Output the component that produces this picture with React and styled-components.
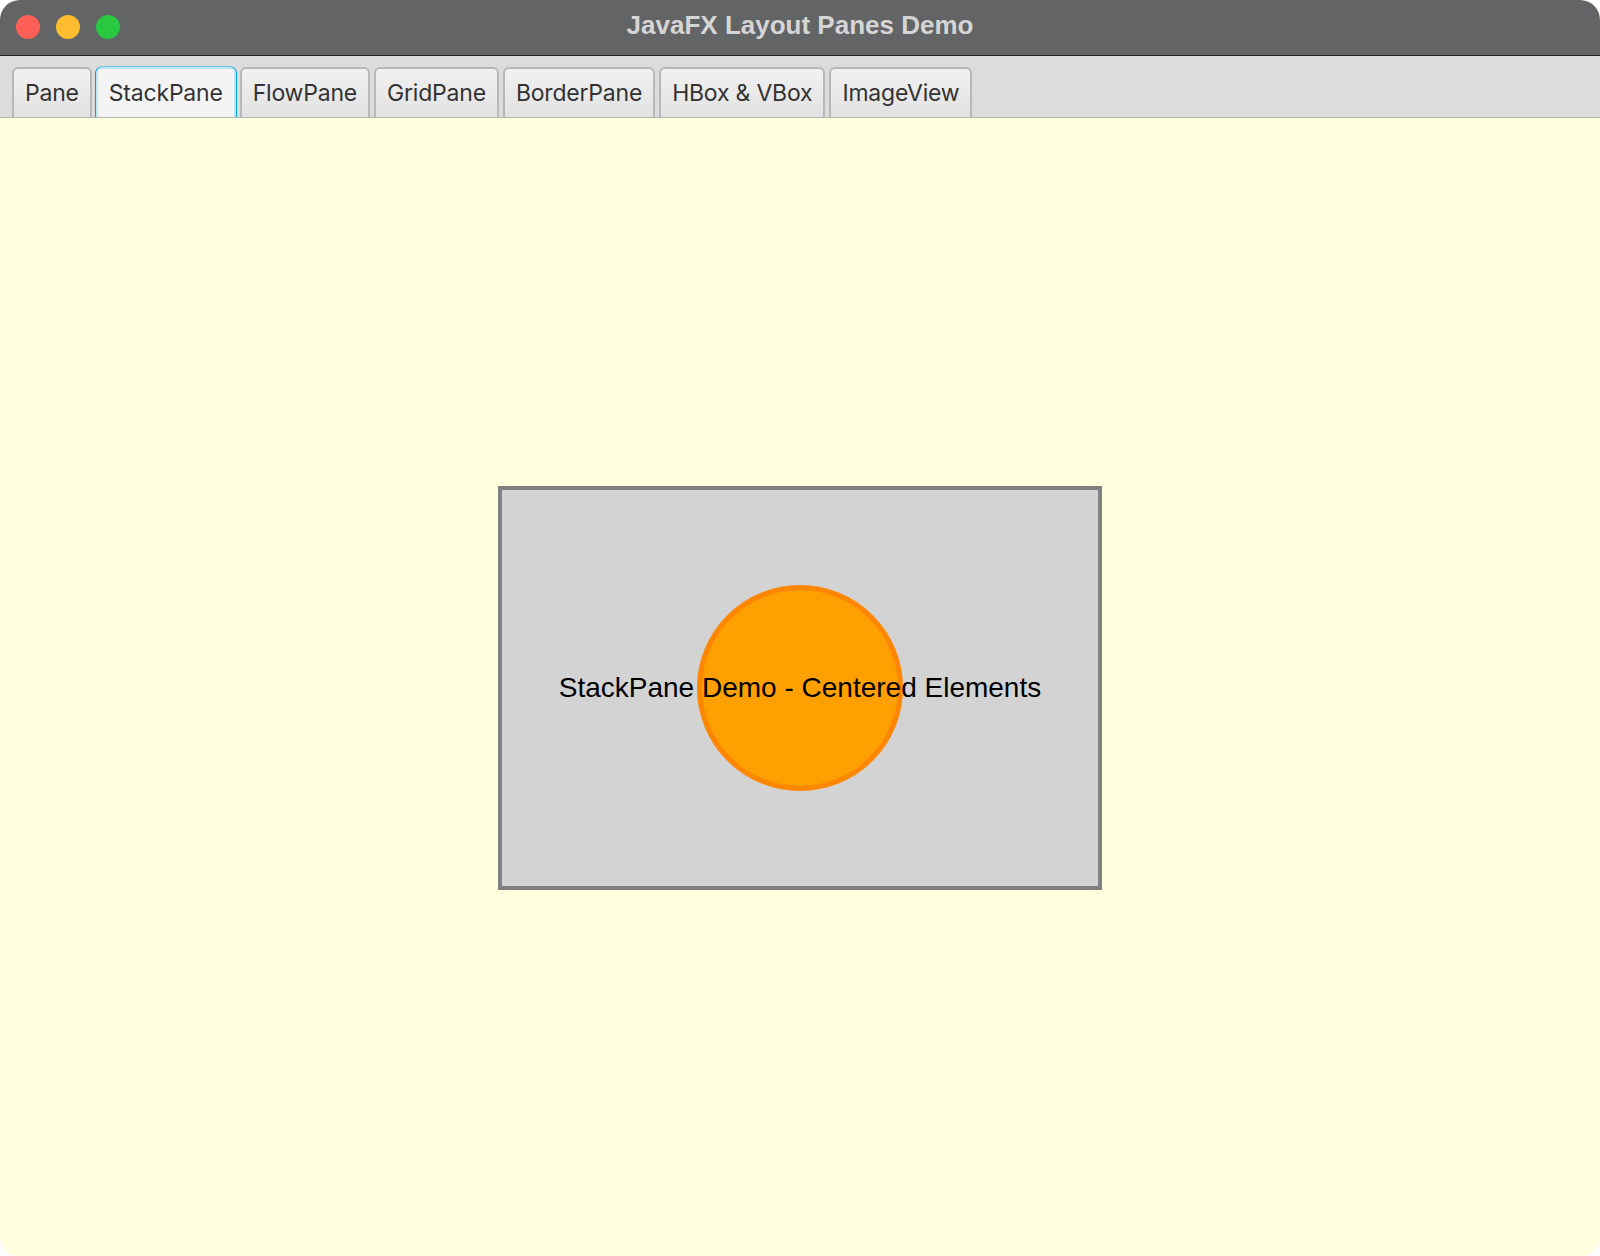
import React, { useState } from 'react'
import styled, { createGlobalStyle } from 'styled-components'

const GlobalStyle = createGlobalStyle`
	html, body {
		margin: 0;
		padding: 0;
		background: #ffffff;
	}
	#root {
		width: 1600px;
		height: 1256px;
	}
`

const tabs = ['Pane', 'StackPane', 'FlowPane', 'GridPane', 'BorderPane', 'HBox & VBox', 'ImageView']

const App = () => {
	const [active, setActive] = useState('StackPane')

	return (
		<>
			<GlobalStyle />
			<Window>
				<TitleBar>
					<Lights>
						<Light color='#ff5f57' />
						<Light color='#febc2e' />
						<Light color='#28c840' />
					</Lights>
					<Title>JavaFX Layout Panes Demo</Title>
				</TitleBar>
				<TabHeader>
					{tabs.map((t) => (
						<Tab key={t} selected={t === active} onClick={() => setActive(t)}>
							{t}
						</Tab>
					))}
				</TabHeader>
				<Content>
					<StackBox>
						<Circle />
						<Label>StackPane Demo - Centered Elements</Label>
					</StackBox>
				</Content>
			</Window>
		</>
	)
}

export default App

const Window = styled.div`
	width: 1600px;
	height: 1256px;
	border-radius: 20px;
	overflow: hidden;
	display: flex;
	flex-direction: column;
	background-color: #ffffe0;
`

const TitleBar = styled.div`
	position: relative;
	height: 56px;
	flex-shrink: 0;
	box-sizing: border-box;
	background-color: #636466;
	border-bottom: 1px solid #262626;
	display: flex;
	align-items: center;
	justify-content: center;
`

const Lights = styled.div`
	position: absolute;
	left: 16px;
	top: 15px;
	display: flex;
	gap: 16px;
`

const Light = styled.span`
	width: 24px;
	height: 24px;
	border-radius: 50%;
	background-color: ${(p) => p.color};
`

const Title = styled.div`
	font-family: 'Liberation Sans', Arial, sans-serif;
	font-weight: 700;
	font-size: 26px;
	color: #d5d5d5;
	margin-top: -5px;
`

const TabHeader = styled.div`
	height: 62px;
	flex-shrink: 0;
	box-sizing: border-box;
	background-color: #dcdcdc;
	border-bottom: 1px solid #b4b4b4;
	padding: 11px 0 0 12px;
	display: flex;
	align-items: flex-end;
	gap: 4px;
`

const Tab = styled.div`
	box-sizing: border-box;
	height: 50px;
	padding: 0 11px;
	display: flex;
	align-items: center;
	justify-content: center;
	font-family: Inter, 'Noto Sans', sans-serif;
	font-size: 23px;
	letter-spacing: -0.2px;
	color: #333333;
	cursor: default;
	border-radius: 6px 6px 0 0;
	border: 2px solid ${(p) => (p.selected ? '#bfe6f5' : '#b8b8b8')};
	border-bottom: none;
	background: ${(p) => (p.selected ? '#f4f4f4' : 'linear-gradient(#f1f1f1, #e2e2e2)')};
	box-shadow: ${(p) => (p.selected ? '-1px 0 0 #039ed3, 1px 0 0 #039ed3, 0 -1px 0 #6cc7ea' : 'none')};
`

const Content = styled.div`
	flex: 1;
	background-color: #ffffe0;
	display: flex;
	align-items: center;
	justify-content: center;
`

const StackBox = styled.div`
	box-sizing: border-box;
	width: 604px;
	height: 404px;
	margin-top: 1px;
	background-color: #d3d3d3;
	border: 4px solid #808080;
	display: grid;
	place-items: center;

	& > * {
		grid-area: 1 / 1;
	}
`

const Circle = styled.div`
	box-sizing: border-box;
	width: 206px;
	height: 206px;
	border-radius: 50%;
	background-color: #ffa000;
	border: 5px solid #ff8600;
`

const Label = styled.div`
	font-family: 'Liberation Sans', Arial, sans-serif;
	font-size: 28px;
	color: #000000;
`
